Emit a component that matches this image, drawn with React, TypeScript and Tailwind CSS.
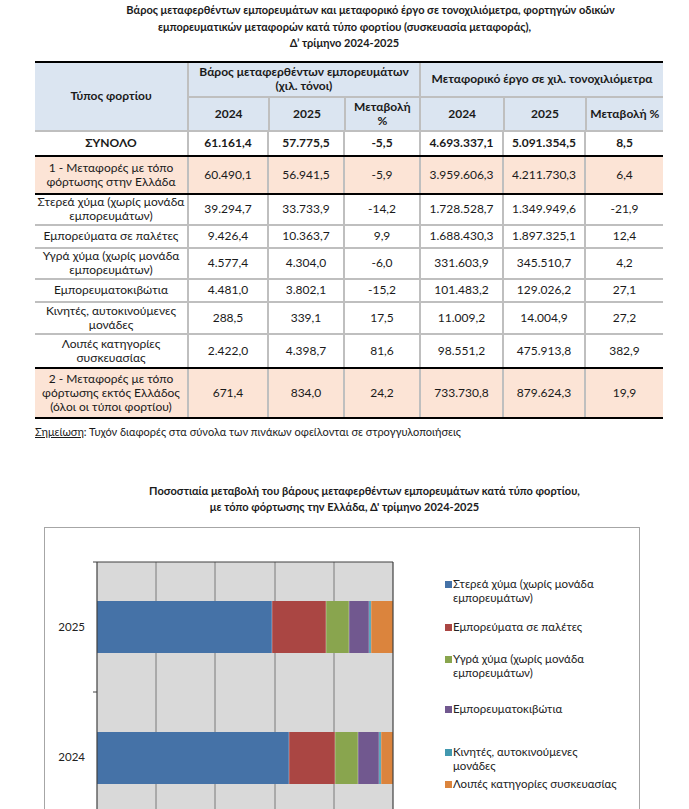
import React from "react";

const W = [152, 80, 76, 76, 83, 82, 79];

type Row = {
  label: React.ReactNode;
  vals: string[];
  h: number;
  bold?: boolean;
  orange?: boolean;
  thick?: boolean;
};

const rows: Row[] = [
  { label: "ΣΥΝΟΛΟ", vals: ["61.161,4", "57.775,5", "-5,5", "4.693.337,1", "5.091.354,5", "8,5"], h: 25, bold: true, thick: true },
  { label: <>1 - Μεταφορές με τόπο<br />φόρτωσης στην Ελλάδα</>, vals: ["60.490,1", "56.941,5", "-5,9", "3.959.606,3", "4.211.730,3", "6,4"], h: 38, orange: true, thick: true },
  { label: <>Στερεά χύμα (χωρίς μονάδα<br />εμπορευμάτων)</>, vals: ["39.294,7", "33.733,9", "-14,2", "1.728.528,7", "1.349.949,6", "-21,9"], h: 31 },
  { label: "Εμπορεύματα σε παλέτες", vals: ["9.426,4", "10.363,7", "9,9", "1.688.430,3", "1.897.325,1", "12,4"], h: 23 },
  { label: <>Υγρά χύμα (χωρίς μονάδα<br />εμπορευμάτων)</>, vals: ["4.577,4", "4.304,0", "-6,0", "331.603,9", "345.510,7", "4,2"], h: 31 },
  { label: "Εμπορευματοκιβώτια", vals: ["4.481,0", "3.802,1", "-15,2", "101.483,2", "129.026,2", "27,1"], h: 23 },
  { label: <>Κινητές, αυτοκινούμενες<br />μονάδες</>, vals: ["288,5", "339,1", "17,5", "11.009,2", "14.004,9", "27,2"], h: 32 },
  { label: <>Λοιπές κατηγορίες<br />συσκευασίας</>, vals: ["2.422,0", "4.398,7", "81,6", "98.551,2", "475.913,8", "382,9"], h: 34, thick: true },
  { label: <>2 - Μεταφορές με τόπο<br />φόρτωσης εκτός Ελλάδος<br />(όλοι οι τύποι φορτίου)</>, vals: ["671,4", "834,0", "24,2", "733.730,8", "879.624,3", "19,9"], h: 50, orange: true, thick: true },
];

const colors = {
  blue: "#4572a7",
  red: "#aa4643",
  green: "#89a54e",
  purple: "#71588f",
  teal: "#4198af",
  orange: "#db843d",
};

function Bar({ y, segs }: { y: number; segs: [number, number, string][] }) {
  return (
    <g>
      {segs.map(([a, b, c], i) => (
        <rect key={i} x={a} y={y} width={b - a} height={52} fill={c} />
      ))}
      {segs.slice(1).map(([a], i) => (
        <line key={"s" + i} x1={a} y1={y} x2={a} y2={y + 52} stroke="#ffffff" strokeOpacity="0.35" strokeWidth="1" />
      ))}
    </g>
  );
}

function Chart() {
  const grid = [111, 170, 230, 289];
  return (
    <svg width="350" height="290" className="block">
      <rect x="52" y="34" width="296" height="262" fill="#d9d9d9" />
      {grid.map((x) => (
        <line key={x} x1={x} y1={34} x2={x} y2={296} stroke="#7a7a7a" strokeWidth="1" />
      ))}
      <Bar
        y={73}
        segs={[
          [52, 227, colors.blue],
          [227, 281, colors.red],
          [281, 304, colors.green],
          [304, 324, colors.purple],
          [324, 326, colors.teal],
          [326, 348, colors.orange],
        ]}
      />
      <Bar
        y={204}
        segs={[
          [52, 244, colors.blue],
          [244, 290, colors.red],
          [290, 313, colors.green],
          [313, 334, colors.purple],
          [334, 336, colors.teal],
          [336, 348, colors.orange],
        ]}
      />
      <line x1="52" y1="34" x2="348" y2="34" stroke="#404040" strokeWidth="1.2" />
      <line x1="52" y1="34" x2="52" y2="296" stroke="#404040" strokeWidth="1.2" />
      <line x1="348" y1="34" x2="348" y2="296" stroke="#404040" strokeWidth="1.2" />
      <line x1="48" y1="34" x2="52" y2="34" stroke="#404040" strokeWidth="1" />
      <line x1="48" y1="164" x2="52" y2="164" stroke="#404040" strokeWidth="1" />
      <text x="40" y="103" textAnchor="end" fontSize="11.5" fill="#222" fontFamily="Lato, sans-serif">2025</text>
      <text x="40" y="233" textAnchor="end" fontSize="11.5" fill="#222" fontFamily="Lato, sans-serif">2024</text>
    </svg>
  );
}

function LegendItem({ color, children, mt }: { color: string; children: React.ReactNode; mt: string }) {
  return (
    <div className={`flex items-start ${mt}`}>
      <span className="mt-[4px] mr-[1px] inline-block h-[7px] w-[7px] shrink-0" style={{ background: color }} />
      <span className="leading-[14px]">{children}</span>
    </div>
  );
}

export default function App() {
  return (
    <div className="relative h-[809px] w-[689px] overflow-hidden bg-white text-[#1a1a1a]" style={{ fontFamily: "Lato, 'Noto Sans', sans-serif" }}>
      {/* Title */}
      <div className="flex flex-col items-center pt-[2px] text-[11px] font-bold leading-[16.5px]">
        <div className="pl-[52px]">Βάρος μεταφερθέντων εμπορευμάτων και μεταφορικό έργο σε τονοχιλιόμετρα, φορτηγών οδικών</div>
        <div>εμπορευματικών μεταφορών κατά τύπο φορτίου (συσκευασία μεταφοράς),</div>
        <div>Δ’ τρίμηνο 2024-2025</div>
      </div>

      {/* Table */}
      <div className="ml-[35px] mt-[9px] w-[628px] border-t-2 border-black text-[12px]">
        {/* header */}
        <div className="flex border-b-2 border-[#bfbfbf] bg-[#dbe5f1] font-bold">
          <div className="flex h-[67px] w-[152px] items-center justify-center">Τύπος φορτίου</div>
          <div className="flex w-[232px] flex-col border-l-2 border-[#bfbfbf]">
            <div className="flex h-[35px] flex-col items-center justify-center border-b-2 border-[#bfbfbf] leading-[14px]">
              <div>Βάρος μεταφερθέντων εμπορευμάτων</div>
              <div>(χιλ. τόνοι)</div>
            </div>
            <div className="flex h-[32px]">
              <div className="flex w-[80px] items-center justify-center">2024</div>
              <div className="flex w-[76px] items-center justify-center border-l-2 border-[#bfbfbf]">2025</div>
              <div className="flex w-[76px] flex-col items-center justify-center border-l-2 border-[#bfbfbf] leading-[14px]">
                <div>Μεταβολή</div>
                <div>%</div>
              </div>
            </div>
          </div>
          <div className="flex w-[244px] flex-col border-l-2 border-[#bfbfbf]">
            <div className="flex h-[35px] items-center justify-center border-b-2 border-[#bfbfbf]">Μεταφορικό έργο σε χιλ. τονοχιλιόμετρα</div>
            <div className="flex h-[32px]">
              <div className="flex w-[83px] items-center justify-center">2024</div>
              <div className="flex w-[82px] items-center justify-center border-l-2 border-[#bfbfbf]">2025</div>
              <div className="flex w-[79px] items-center justify-center border-l-2 border-[#bfbfbf]">Μεταβολή %</div>
            </div>
          </div>
        </div>
        {/* body */}
        {rows.map((r, i) => (
          <div
            key={i}
            className={`flex border-b-2 ${r.thick ? "border-black" : "border-[#bfbfbf]"} ${r.orange ? "bg-[#fce4d6]" : ""} ${r.bold ? "font-bold" : ""}`}
            style={{ height: r.h }}
          >
            <div className="flex items-center justify-center text-center leading-[14px]" style={{ width: W[0] }}>
              <div>{r.label}</div>
            </div>
            {r.vals.map((v, j) => (
              <div key={j} className="flex items-center justify-center border-l-2 border-[#bfbfbf]" style={{ width: W[j + 1] }}>
                {v}
              </div>
            ))}
          </div>
        ))}
      </div>

      {/* Note */}
      <div className="ml-[35px] mt-[6px] text-[11px] leading-[14px]">
        <span className="underline">Σημείωση</span>: Τυχόν διαφορές στα σύνολα των πινάκων οφείλονται σε στρογγυλοποιήσεις
      </div>

      {/* Chart title */}
      <div className="mt-[44px] flex flex-col items-center text-[11px] font-bold leading-[16px]">
        <div className="pl-[40px]">Ποσοστιαία μεταβολή του βάρους μεταφερθέντων εμπορευμάτων κατά τύπο φορτίου,</div>
        <div>με τόπο φόρτωσης την Ελλάδα, Δ' τρίμηνο 2024-2025</div>
      </div>

      {/* Chart box */}
      <div className="ml-[44px] mt-[12px] flex h-[300px] w-[596px] border border-[#a6a6a6]">
        <Chart />
        <div className="ml-[50px] pt-[49px] text-[11.5px] text-[#222]">
          <LegendItem color={colors.blue} mt="mt-0">Στερεά χύμα (χωρίς μονάδα<br />εμπορευμάτων)</LegendItem>
          <LegendItem color={colors.red} mt="mt-[15px]">Εμπορεύματα σε παλέτες</LegendItem>
          <LegendItem color={colors.green} mt="mt-[18px]">Υγρά χύμα (χωρίς μονάδα<br />εμπορευμάτων)</LegendItem>
          <LegendItem color={colors.purple} mt="mt-[22px]">Εμπορευματοκιβώτια</LegendItem>
          <LegendItem color={colors.teal} mt="mt-[29px]">Κινητές, αυτοκινούμενες<br />μονάδες</LegendItem>
          <LegendItem color={colors.orange} mt="mt-[4px]">Λοιπές κατηγορίες συσκευασίας</LegendItem>
        </div>
      </div>
    </div>
  );
}
